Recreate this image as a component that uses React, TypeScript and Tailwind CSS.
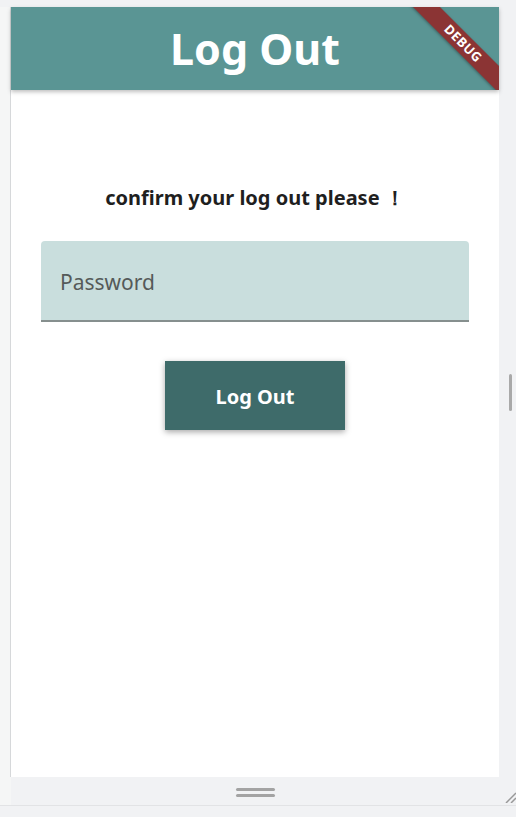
export default function App() {
  return (
    <div className="relative h-[817px] w-[516px] overflow-hidden bg-[#f1f2f4] font-['Noto_Sans',sans-serif]">
      <div className="flex h-[806px] flex-col border-b border-[#e2e3e5]">
        <div className="flex flex-1 pt-[7px]">
          <div className="w-[10px] bg-[#f5f6f6]" />
          <div className="flex w-[489px] flex-col border-l border-[#d6d8da] bg-white">
            <header className="relative flex h-[83px] items-center justify-center overflow-hidden bg-[#5a9594] shadow-[0_2px_4px_rgba(0,0,0,0.25)]">
              <h1 className="text-[43px] font-bold leading-none text-white">Log Out</h1>
              <div className="absolute left-[372px] top-[27px] flex h-[19px] w-[160px] rotate-45 items-center justify-center bg-[#8b3434] text-[13px] font-bold leading-none tracking-[0.5px] text-white shadow-[0_1px_3px_rgba(0,0,0,0.35)]">
                DEBUG
              </div>
            </header>
            <main className="flex flex-1 flex-col items-center px-[30px] pt-[98px]">
              <p className="text-[20px] font-bold leading-none text-[#1f1f1f]">confirm your log out please ！</p>
              <div className="mt-[33px] flex h-[81px] w-full items-center rounded-t-[4px] border-b-2 border-[#868f8e] bg-[#c9dedd] px-[19px] pt-[5px]">
                <span className="text-[21px] text-[#555a59]">Password</span>
              </div>
              <button className="mt-[39px] h-[69px] w-[180px] bg-[#3e6b6a] pt-[3px] text-[20px] font-bold text-white shadow-[0_2px_6px_rgba(0,0,0,0.35)]">
                Log Out
              </button>
            </main>
          </div>
          <div className="flex flex-1 items-start">
            <div className="ml-[10px] mt-[367px] h-[37px] w-[3px] rounded-full bg-[#a9a9a9]" />
          </div>
        </div>
        <div className="flex h-[28px] items-center">
          <div className="h-full w-[11px] bg-[#f5f6f6]" />
          <div className="flex w-[488px] flex-col items-center gap-[3px] pt-[2px]">
            <div className="h-[3px] w-[39px] rounded-full bg-[#a3a3a3]" />
            <div className="h-[3px] w-[39px] rounded-full bg-[#a3a3a3]" />
          </div>
        </div>
      </div>
      <svg className="absolute bottom-[14px] right-0" width="12" height="12" viewBox="0 0 12 12">
        <path d="M2 12 L12 2 M7 12 L12 7" stroke="#999" strokeWidth="1.5" />
      </svg>
    </div>
  );
}
